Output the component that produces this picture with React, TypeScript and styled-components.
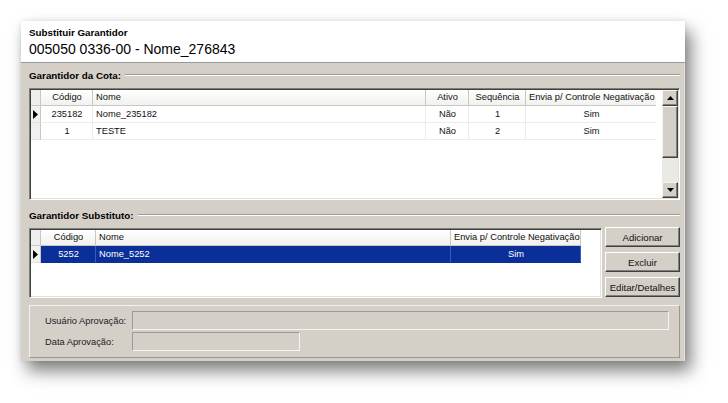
import React from 'react';
import styled, { createGlobalStyle } from 'styled-components';

const GlobalStyle = createGlobalStyle`
  html, body { margin: 0; padding: 0; background: #ffffff; }
  body {
    font-family: "Liberation Sans", Arial, sans-serif;
    font-size: 9.3px;
    color: #111111;
  }
  * { box-sizing: border-box; }
`;

const Page = styled.div`
  min-height: 403px;
  padding: 21px 0 0 21px;
  display: flex;
  align-items: flex-start;
`;

const Window = styled.div`
  width: 664px;
  display: flex;
  flex-direction: column;
  box-shadow: 6px 10px 16px rgba(0, 0, 0, 0.5), 0 0 5px rgba(0, 0, 0, 0.1);
`;

const Header = styled.header`
  height: 42px;
  background: #ffffff;
  padding: 6px 8px 0;
  border-bottom: 1px solid #9c9a94;
`;

const Caption = styled.div`
  font-weight: bold;
  font-size: 9.8px;
  line-height: 12px;
  color: #000;
`;

const Title = styled.div`
  margin-top: 2px;
  font-size: 14px;
  line-height: 17px;
  color: #000;
`;

const Body = styled.main`
  background: #d4d0c8;
  padding: 5px 4px 3px 8px;
  display: flex;
  flex-direction: column;
  border-right: 1px solid #e6e3dc;
`;

const GroupHeader = styled.div<{ $top: number }>`
  height: 14px;
  margin-top: ${(p) => p.$top}px;
  margin-bottom: 6px;
  display: flex;
  align-items: center;
  gap: 4px;
`;

const GroupText = styled.span`
  font-weight: bold;
  font-size: 9.8px;
  color: #000;
  white-space: nowrap;
`;

const GroupRule = styled.span`
  flex: 1;
  height: 2px;
  border-top: 1px solid #9c9a94;
  border-bottom: 1px solid #ffffff;
`;

const GridFrame = styled.div<{ $height: number; $width?: number }>`
  height: ${(p) => p.$height}px;
  ${(p) => (p.$width ? `width: ${p.$width}px; flex: 0 0 ${p.$width}px;` : 'width: 100%;')}
  background: #ffffff;
  border: 1px solid;
  border-color: #7f7d78 #ffffff #ffffff #7f7d78;
  box-shadow: inset 1px 1px 0 #404040, inset -1px -1px 0 #e4e1da;
  padding: 1px;
  display: flex;
  overflow: hidden;
`;

const GridArea = styled.div`
  flex: 1;
  display: flex;
  flex-direction: column;
  overflow: hidden;
`;

const GridRow = styled.div<{ $header?: boolean }>`
  display: flex;
  height: ${(p) => (p.$header ? 16 : 17)}px;
  flex: 0 0 auto;
`;

const HeaderCell = styled.div<{ $w: number; $align: string }>`
  width: ${(p) => p.$w}px;
  flex: 0 0 ${(p) => p.$w}px;
  background: linear-gradient(#ffffff, #f1f1ef);
  border-right: 1px solid #c9c7c2;
  border-bottom: 1px solid #c9c7c2;
  text-align: ${(p) => p.$align};
  padding: 0 2px 0 3px;
  line-height: 15px;
  white-space: nowrap;
  overflow: hidden;
  color: #111;
`;

const Cell = styled.div<{ $w: number; $align: string; $selected?: boolean }>`
  width: ${(p) => p.$w}px;
  flex: 0 0 ${(p) => p.$w}px;
  text-align: ${(p) => p.$align};
  padding: 0 2px 0 3px;
  line-height: 16px;
  white-space: nowrap;
  overflow: hidden;
  background: ${(p) => (p.$selected ? '#0b2f98' : '#ffffff')};
  color: ${(p) => (p.$selected ? '#ffffff' : '#111111')};
  border-right: 1px solid ${(p) => (p.$selected ? '#3d5cb4' : '#ececec')};
  border-bottom: 1px solid ${(p) => (p.$selected ? '#0b2f98' : '#ececec')};
`;

const IndicatorCell = styled.div<{ $header?: boolean }>`
  width: 10px;
  flex: 0 0 10px;
  background: ${(p) => (p.$header ? '#eeeeec' : '#f0f0ee')};
  border-right: 1px solid #c9c7c2;
  border-bottom: 1px solid ${(p) => (p.$header ? '#c9c7c2' : '#e2e2e0')};
  display: flex;
  align-items: center;
  justify-content: flex-start;
  padding-left: 2px;
`;

const ScrollBar = styled.div`
  width: 16px;
  flex: 0 0 16px;
  margin-left: 6px;
  display: flex;
  flex-direction: column;
  background: #ebe9e3;
`;

const ScrollButton = styled.div`
  height: 16px;
  flex: 0 0 16px;
  background: #d4d0c8;
  border: 1px solid;
  border-color: #f6f5f1 #404040 #404040 #f6f5f1;
  box-shadow: inset -1px -1px 0 #808080;
  display: flex;
  align-items: center;
  justify-content: center;
`;

const ScrollThumb = styled.div`
  height: 52px;
  flex: 0 0 52px;
  background: #d4d0c8;
  border: 1px solid;
  border-color: #f6f5f1 #404040 #404040 #f6f5f1;
  box-shadow: inset -1px -1px 0 #808080;
`;

const ScrollTrack = styled.div`
  flex: 1;
`;

const SubstituteRow = styled.div`
  display: flex;
  gap: 3px;
  align-items: flex-start;
`;

const ActionColumn = styled.div`
  flex: 1;
  margin-top: -1px;
  display: flex;
  flex-direction: column;
  gap: 5px;
`;

const ActionButton = styled.button`
  height: 20px;
  width: 100%;
  padding: 0;
  background: #d4d0c8;
  border: 1px solid;
  border-color: #ffffff #404040 #404040 #ffffff;
  box-shadow: inset -1px -1px 0 #808080;
  font-family: "Liberation Sans", Arial, sans-serif;
  font-size: 9.6px;
  color: #111;
  text-align: center;
`;

const ApprovalPanel = styled.section`
  margin-top: 7px;
  height: 53px;
  border: 1px solid;
  border-color: #f4f2ee #9a978f #9a978f #f4f2ee;
  padding: 5px 10px 5px 15px;
  display: flex;
  flex-direction: column;
  gap: 2px;
`;

const FieldRow = styled.div`
  display: flex;
  align-items: center;
`;

const FieldLabel = styled.label`
  width: 87px;
  flex: 0 0 87px;
  color: #222;
  white-space: nowrap;
`;

const FieldBox = styled.div<{ $w: number }>`
  width: ${(p) => p.$w}px;
  height: 19px;
  background: #d4d0c8;
  border: 1px solid;
  border-color: #9c9a94 #f6f5f1 #f6f5f1 #9c9a94;
`;

type Col = { key: string; label: string; width: number; align: 'left' | 'center' };

const Arrow = () => (
  <svg width="5" height="9" viewBox="0 0 5 9">
    <path d="M0 0 L5 4.5 L0 9 Z" fill="#000" />
  </svg>
);

const ScrollArrow = ({ up }: { up?: boolean }) => (
  <svg width="7" height="4" viewBox="0 0 7 4">
    <path d={up ? 'M0 4 L3.5 0 L7 4 Z' : 'M0 0 L7 0 L3.5 4 Z'} fill="#000" />
  </svg>
);

type GridProps = {
  columns: Col[];
  rows: Record<string, string>[];
  current: number;
  selected?: number;
};

const DataGrid = ({ columns, rows, current, selected }: GridProps) => (
  <GridArea>
    <GridRow $header>
      <IndicatorCell $header />
      {columns.map((c) => (
        <HeaderCell key={c.key} $w={c.width} $align={c.align === 'left' ? 'left' : 'center'}>
          {c.label}
        </HeaderCell>
      ))}
    </GridRow>
    {rows.map((r, i) => (
      <GridRow key={i}>
        <IndicatorCell>{i === current ? <Arrow /> : null}</IndicatorCell>
        {columns.map((c) => (
          <Cell key={c.key} $w={c.width} $align={c.align} $selected={selected === i}>
            {r[c.key]}
          </Cell>
        ))}
      </GridRow>
    ))}
  </GridArea>
);

const cotaColumns: Col[] = [
  { key: 'codigo', label: 'Código', width: 52, align: 'center' },
  { key: 'nome', label: 'Nome', width: 333, align: 'left' },
  { key: 'ativo', label: 'Ativo', width: 43, align: 'center' },
  { key: 'seq', label: 'Sequência', width: 57, align: 'center' },
  { key: 'envia', label: 'Envia p/ Controle Negativação', width: 131, align: 'center' },
];

const cotaRows = [
  { codigo: '235182', nome: 'Nome_235182', ativo: 'Não', seq: '1', envia: 'Sim' },
  { codigo: '1', nome: 'TESTE', ativo: 'Não', seq: '2', envia: 'Sim' },
];

const subColumns: Col[] = [
  { key: 'codigo', label: 'Código', width: 55, align: 'center' },
  { key: 'nome', label: 'Nome', width: 355, align: 'left' },
  { key: 'envia', label: 'Envia p/ Controle Negativação', width: 130, align: 'center' },
];

const subRows = [{ codigo: '5252', nome: 'Nome_5252', envia: 'Sim' }];

export default function App() {
  return (
    <Page>
      <GlobalStyle />
      <Window>
        <Header>
          <Caption>Substituir Garantidor</Caption>
          <Title>005050 0336-00 - Nome_276843</Title>
        </Header>
        <Body>
          <GroupHeader $top={0}>
            <GroupText>Garantidor da Cota:</GroupText>
            <GroupRule />
          </GroupHeader>
          <GridFrame $height={112}>
            <DataGrid columns={cotaColumns} rows={cotaRows} current={0} />
            <ScrollBar>
              <ScrollButton>
                <ScrollArrow up />
              </ScrollButton>
              <ScrollThumb />
              <ScrollTrack />
              <ScrollButton>
                <ScrollArrow />
              </ScrollButton>
            </ScrollBar>
          </GridFrame>
          <GroupHeader $top={8}>
            <GroupText>Garantidor Substituto:</GroupText>
            <GroupRule />
          </GroupHeader>
          <SubstituteRow>
            <GridFrame $height={70} $width={573}>
              <DataGrid columns={subColumns} rows={subRows} current={0} selected={0} />
            </GridFrame>
            <ActionColumn>
              <ActionButton>Adicionar</ActionButton>
              <ActionButton>Excluir</ActionButton>
              <ActionButton>Editar/Detalhes</ActionButton>
            </ActionColumn>
          </SubstituteRow>
          <ApprovalPanel>
            <FieldRow>
              <FieldLabel>Usuário Aprovação:</FieldLabel>
              <FieldBox $w={538} />
            </FieldRow>
            <FieldRow>
              <FieldLabel>Data Aprovação:</FieldLabel>
              <FieldBox $w={168} />
            </FieldRow>
          </ApprovalPanel>
        </Body>
      </Window>
    </Page>
  );
}
